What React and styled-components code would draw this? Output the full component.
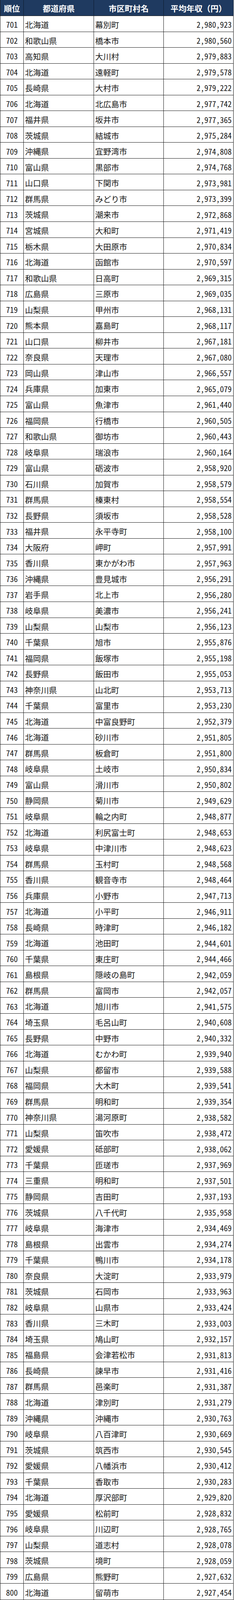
import React from "react";
import styled, { createGlobalStyle } from "styled-components";

const Global = createGlobalStyle`
  html, body { margin: 0; padding: 0; background: #ffffff; }
  body { font-family: "Noto Sans CJK JP", "Noto Sans", sans-serif; }
`;

const raw = `701 北海道 幕別町 2,980,923
702 和歌山県 橋本市 2,980,560
703 高知県 大川村 2,979,883
704 北海道 遠軽町 2,979,578
705 長崎県 大村市 2,979,222
706 北海道 北広島市 2,977,742
707 福井県 坂井市 2,977,365
708 茨城県 結城市 2,975,284
709 沖縄県 宜野湾市 2,974,808
710 富山県 黒部市 2,974,768
711 山口県 下関市 2,973,981
712 群馬県 みどり市 2,973,399
713 茨城県 潮来市 2,972,868
714 宮城県 大和町 2,971,419
715 栃木県 大田原市 2,970,834
716 北海道 函館市 2,970,597
717 和歌山県 日高町 2,969,315
718 広島県 三原市 2,969,035
719 山梨県 甲州市 2,968,131
720 熊本県 嘉島町 2,968,117
721 山口県 柳井市 2,967,181
722 奈良県 天理市 2,967,080
723 岡山県 津山市 2,966,557
724 兵庫県 加東市 2,965,079
725 富山県 魚津市 2,961,440
726 福岡県 行橋市 2,960,505
727 和歌山県 御坊市 2,960,443
728 岐阜県 瑞浪市 2,960,164
729 富山県 砺波市 2,958,920
730 石川県 加賀市 2,958,579
731 群馬県 榛東村 2,958,554
732 長野県 須坂市 2,958,528
733 福井県 永平寺町 2,958,100
734 大阪府 岬町 2,957,991
735 香川県 東かがわ市 2,957,963
736 沖縄県 豊見城市 2,956,291
737 岩手県 北上市 2,956,280
738 岐阜県 美濃市 2,956,241
739 山梨県 山梨市 2,956,123
740 千葉県 旭市 2,955,876
741 福岡県 飯塚市 2,955,198
742 長野県 飯田市 2,955,053
743 神奈川県 山北町 2,953,713
744 千葉県 富里市 2,953,230
745 北海道 中富良野町 2,952,379
746 北海道 砂川市 2,951,805
747 群馬県 板倉町 2,951,800
748 岐阜県 土岐市 2,950,834
749 富山県 滑川市 2,950,802
750 静岡県 菊川市 2,949,629
751 岐阜県 輪之内町 2,948,877
752 北海道 利尻富士町 2,948,653
753 岐阜県 中津川市 2,948,623
754 群馬県 玉村町 2,948,568
755 香川県 観音寺市 2,948,464
756 兵庫県 小野市 2,947,713
757 北海道 小平町 2,946,911
758 長崎県 時津町 2,946,182
759 北海道 池田町 2,944,601
760 千葉県 東庄町 2,944,466
761 島根県 隠岐の島町 2,942,059
762 群馬県 富岡市 2,942,057
763 北海道 旭川市 2,941,575
764 埼玉県 毛呂山町 2,940,608
765 長野県 中野市 2,940,332
766 北海道 むかわ町 2,939,940
767 山梨県 都留市 2,939,588
768 福岡県 大木町 2,939,541
769 群馬県 明和町 2,939,354
770 神奈川県 湯河原町 2,938,582
771 山梨県 笛吹市 2,938,472
772 愛媛県 砥部町 2,938,062
773 千葉県 匝瑳市 2,937,969
774 三重県 明和町 2,937,501
775 静岡県 吉田町 2,937,193
776 茨城県 八千代町 2,935,958
777 岐阜県 海津市 2,934,469
778 島根県 出雲市 2,934,274
779 千葉県 鴨川市 2,934,178
780 奈良県 大淀町 2,933,979
781 茨城県 石岡市 2,933,963
782 岐阜県 山県市 2,933,424
783 香川県 三木町 2,933,003
784 埼玉県 鳩山町 2,932,157
785 福島県 会津若松市 2,931,813
786 長崎県 諫早市 2,931,416
787 群馬県 邑楽町 2,931,387
788 北海道 津別町 2,931,279
789 沖縄県 沖縄市 2,930,763
790 岐阜県 八百津町 2,930,669
791 茨城県 筑西市 2,930,545
792 愛媛県 八幡浜市 2,930,412
793 千葉県 香取市 2,930,283
794 北海道 厚沢部町 2,929,820
795 愛媛県 松前町 2,928,832
796 岐阜県 川辺町 2,928,765
797 山梨県 道志村 2,928,078
798 茨城県 境町 2,928,059
799 広島県 熊野町 2,927,632
800 北海道 留萌市 2,927,454`;

const rows = raw.split("\n").map((l) => {
  const [rank, pref, city, income] = l.trim().split(" ");
  return { rank, pref, city, income };
});

const Table = styled.div`
  display: grid;
  grid-template-columns: 60px 180px 179px 179px;
  grid-template-rows: 41px repeat(100, minmax(0, 1fr));
  width: 599px;
  height: 4096px;
  box-sizing: border-box;
  border-left: 1px solid #1a1a1a;
  border-bottom: 1px solid #1a1a1a;
  color: #161616;
  overflow: hidden;
`;

const HeadCell = styled.div`
  box-sizing: border-box;
  min-height: 0;
  overflow: hidden;
  display: flex;
  align-items: center;
  justify-content: center;
  padding-top: 2px;
  background: #1f3a60;
  color: #ffffff;
  font-family: "Noto Sans CJK JP", sans-serif;
  font-weight: 700;
  font-size: 20.5px;
  line-height: 1;
  border-right: 1px solid #0e1a2c;
  border-bottom: 1px solid #1a1a1a;
  white-space: nowrap;
`;

const Cell = styled.div`
  box-sizing: border-box;
  min-height: 0;
  overflow: hidden;
  display: flex;
  align-items: center;
  justify-content: ${(p) =>
    p.$align === "right" ? "flex-end" : p.$align === "center" ? "center" : "flex-start"};
  padding: 5px ${(p) => (p.$align === "right" ? "4px" : "0")} 0
    ${(p) => (p.$align === "left" ? "3px" : "0")};
  font-family: ${(p) =>
    p.$num
      ? `"Noto Sans Mono CJK JP", "Noto Sans CJK JP", sans-serif`
      : `"Noto Sans CJK JP", sans-serif`};
  font-size: ${(p) => (p.$num ? "20px" : "20.5px")};
  line-height: 1;
  border-right: 1px solid #1a1a1a;
  border-bottom: ${(p) => (p.$last ? "none" : "1px solid #1a1a1a")};
  white-space: nowrap;
  background: #ffffff;
`;

export default function App() {
  return (
    <>
      <Global />
      <Table>
        <HeadCell>順位</HeadCell>
        <HeadCell>都道府県</HeadCell>
        <HeadCell>市区町村名</HeadCell>
        <HeadCell>平均年収（円）</HeadCell>
        {rows.map((r, i) => {
          const last = i === rows.length - 1;
          return (
            <React.Fragment key={r.rank}>
              <Cell $align="center" $num $last={last}>{r.rank}</Cell>
              <Cell $align="left" $last={last}>{r.pref}</Cell>
              <Cell $align="left" $last={last}>{r.city}</Cell>
              <Cell $align="right" $num $last={last}>{r.income}</Cell>
            </React.Fragment>
          );
        })}
      </Table>
    </>
  );
}
